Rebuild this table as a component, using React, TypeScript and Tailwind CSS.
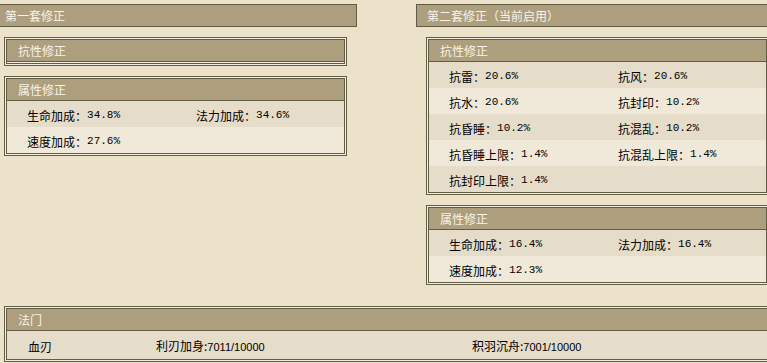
import type { ReactNode } from "react"

// Stat panels for the two correction sets plus the skill row underneath

type Stat = { label: string; value: string }

const font = "font-['Noto_Sans_CJK_SC',sans-serif]"

const firstSetAttrs: Stat[] = [
  { label: "生命加成", value: "34.8%" },
  { label: "法力加成", value: "34.6%" },
  { label: "速度加成", value: "27.6%" },
]

const secondSetResist: Stat[] = [
  { label: "抗雷", value: "20.6%" },
  { label: "抗风", value: "20.6%" },
  { label: "抗水", value: "20.6%" },
  { label: "抗封印", value: "10.2%" },
  { label: "抗昏睡", value: "10.2%" },
  { label: "抗混乱", value: "10.2%" },
  { label: "抗昏睡上限", value: "1.4%" },
  { label: "抗混乱上限", value: "1.4%" },
  { label: "抗封印上限", value: "1.4%" },
]

const secondSetAttrs: Stat[] = [
  { label: "生命加成", value: "16.4%" },
  { label: "法力加成", value: "16.4%" },
  { label: "速度加成", value: "12.3%" },
]

function TitleBar({ children }: { children: ReactNode }) {
  return (
    <div className="flex h-[23px] items-center border border-[#615d45] bg-[#ad9f7d] pl-[10px] text-[12px] leading-none text-[#f7f3e8]">
      {children}
    </div>
  )
}

function Panel({ title, children }: { title: string; children?: ReactNode }) {
  return (
    <div className="border border-[#615d45] bg-[#f4efe2] p-px">
      <div className="border border-[#615d45]">
        <div className="flex h-[22px] items-center border-b border-[#615d45] bg-[#ad9f7d] pl-[11px] text-[12px] leading-none text-[#f7f3e8]">
          {title}
        </div>
        {children ?? <div className="h-px bg-[#f4efe2]" />}
      </div>
    </div>
  )
}

function StatRows({ stats }: { stats: Stat[] }) {
  const rows: Stat[][] = []
  for (let i = 0; i < stats.length; i += 2) rows.push(stats.slice(i, i + 2))
  return (
    <div>
      {rows.map((row, i) => (
        <div
          key={i}
          className={`flex h-[26px] items-center overflow-hidden pl-[20px] pt-[3px] text-[12px] leading-none text-black ${
            i % 2 === 0 ? "bg-[#e6dcca]" : "bg-[#f0e9d9]"
          }`}
        >
          {row.map((s) => (
            <div key={s.label} className="flex w-[169px] shrink-0 items-center">
              <span>{s.label}：</span>
              <span className="font-['Liberation_Mono',monospace] text-[11px]">{s.value}</span>
            </div>
          ))}
        </div>
      ))}
    </div>
  )
}

export default function App() {
  return (
    <div className={`h-[363px] w-[767px] overflow-hidden bg-[#ece2ca] ${font}`}>
      <div className="ml-[-6px] w-[1000px] pt-[4px]">
        <div className="flex items-start gap-[59px]">
          <div className="flex w-[363px] shrink-0 flex-col">
            <TitleBar>第一套修正</TitleBar>
            <div className="mx-[10px] mt-[10px] flex flex-col gap-[10px]">
              <Panel title="抗性修正" />
              <Panel title="属性修正">
                <StatRows stats={firstSetAttrs} />
              </Panel>
            </div>
          </div>
          <div className="flex w-[363px] shrink-0 flex-col">
            <TitleBar>第二套修正（当前启用）</TitleBar>
            <div className="mx-[10px] mt-[10px] flex flex-col gap-[10px]">
              <Panel title="抗性修正">
                <StatRows stats={secondSetResist} />
              </Panel>
              <Panel title="属性修正">
                <StatRows stats={secondSetAttrs} />
              </Panel>
            </div>
          </div>
        </div>

        <div className="ml-[10px] mt-[21px] w-[900px]">
          <Panel title="法门">
            <div className="flex h-[28px] items-center bg-[#e6dcca] pl-[21px] pt-[3px] text-[12px] leading-none text-black">
              <span className="w-[128px] shrink-0">血刃</span>
              <span className="w-[316px] shrink-0">
                利刃加身:<span className="font-['Liberation_Sans_Narrow','Liberation_Sans',sans-serif] text-[11px]">7011/10000</span>
              </span>
              <span>
                积羽沉舟:<span className="font-['Liberation_Sans_Narrow','Liberation_Sans',sans-serif] text-[11px]">7001/10000</span>
              </span>
            </div>
          </Panel>
        </div>
      </div>
    </div>
  )
}
